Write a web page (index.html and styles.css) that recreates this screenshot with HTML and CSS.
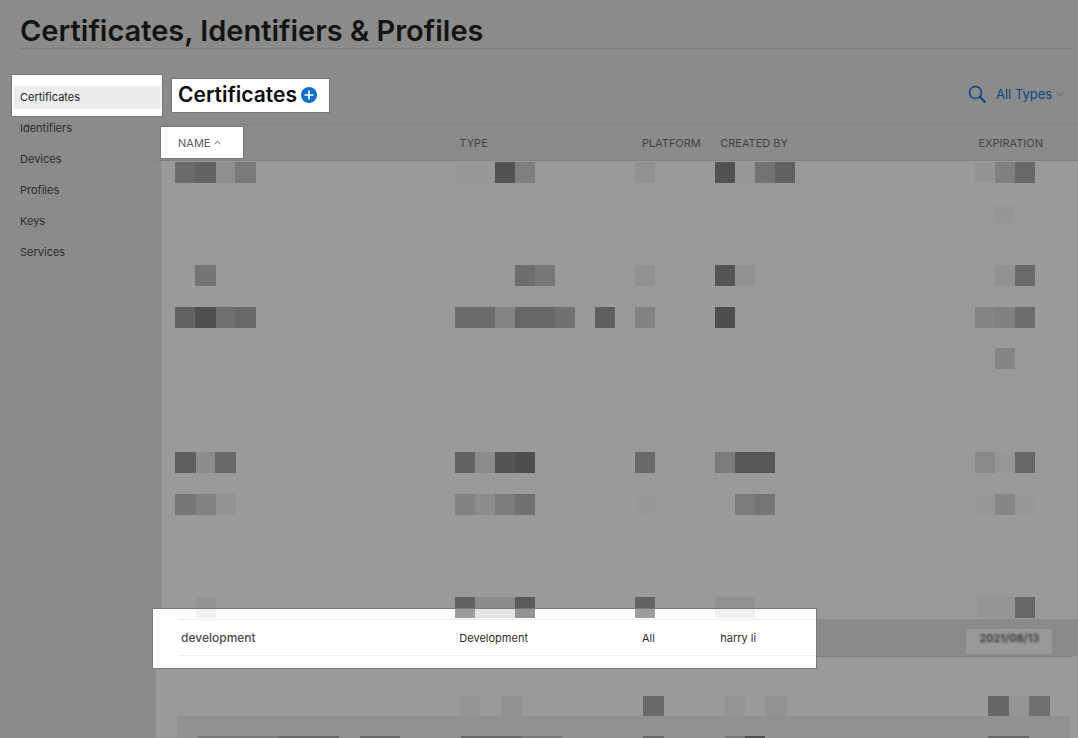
FILE: index.html
```html
<!DOCTYPE html>
<html lang="en">
<head>
<meta charset="utf-8">
<title>Certificates, Identifiers &amp; Profiles</title>
<link rel="stylesheet" href="styles.css">
</head>
<body>
<header class="page-header">
  <h1 class="page-title">Certificates, Identifiers &amp; Profiles</h1>
</header>
<div class="layout">
  <nav class="sidebar">
    <a class="nav-link nav-link-active" href="#certificates">Certificates</a>
    <a class="nav-link" href="#identifiers">Identifiers</a>
    <a class="nav-link" href="#devices">Devices</a>
    <a class="nav-link" href="#profiles">Profiles</a>
    <a class="nav-link" href="#keys">Keys</a>
    <a class="nav-link" href="#services">Services</a>
  </nav>
  <main class="content">
    <div class="toolbar">
      <div class="heading spotlight">
        <h2 class="section-title">Certificates</h2>
        <button class="icon-button" type="button" aria-label="Add certificate">
          <svg width="16" height="16" viewBox="0 0 16 16"><circle cx="8" cy="8" r="8" fill="#0f70cc"/><path d="M8 4.2v7.6M4.2 8h7.6" stroke="#fff" stroke-width="1.7" stroke-linecap="round"/></svg>
        </button>
      </div>
      <div class="filters">
        <button class="icon-button" type="button" aria-label="Search">
          <svg width="18" height="18" viewBox="0 0 18 18" fill="none" stroke="#084a86"><circle cx="7.5" cy="7.5" r="6" stroke-width="1.7"/><path d="M12 12l4.6 4.6" stroke-width="2.4" stroke-linecap="round"/></svg>
        </button>
        <label class="type-filter">
          <select class="type-select" aria-label="Certificate type"><option>All Types</option></select>
          <svg width="8" height="6" viewBox="0 0 8 6" fill="none" stroke="#3f648a" stroke-width="1"><path d="M.8 1.2L4 4.4l3.200-3.200"/></svg>
        </label>
      </div>
    </div>
    <table class="cert-table">
      <colgroup><col class="col-name"><col class="col-type"><col class="col-platform"><col class="col-created"><col class="col-expiration"></colgroup>
      <thead>
        <tr>
          <th class="name-head" scope="col"><button class="sort-button spotlight" type="button">NAME
            <svg width="7" height="5" viewBox="0 0 7 5" fill="none" stroke="#555" stroke-width="1"><path d="M.7 4L3.500 1.300 6.300 4"/></svg></button></th>
          <th scope="col">TYPE</th>
          <th scope="col">PLATFORM</th>
          <th scope="col">CREATED BY</th>
          <th scope="col">EXPIRATION</th>
        </tr>
      </thead>
      <tbody>
        <tr>
          <td class="redacted" colspan="5">
            <svg class="mosaic mosaic-upper" viewBox="156 161 922 458" preserveAspectRatio="none" aria-hidden="true">
              <path fill="#9a9a9a" d="M162 161h916v458H162z"/>
              <path fill="#a5a5a5" d="M162 161h1v458h-1z"/>
              <g transform="translate(0 162)">
                <path fill="#6b6b6b" d="M175 0h20v21h-20z"/><path fill="#636363" d="M195 0h21v21h-21z"/><path fill="#8f8f8f" d="M216 0h19v21h-19z"/><path fill="#7a7a7a" d="M235 0h21v21h-21z"/>
                <path fill="#989898" d="M455 0h40v21h-40z"/><path fill="#525252" d="M495 0h20v21h-20z"/><path fill="#7f7f7f" d="M515 0h20v21h-20z"/>
                <path fill="#919191" d="M635 0h20v21h-20z"/><path fill="#525252" d="M715 0h20v21h-20z"/><path fill="#979797" d="M735 0h20v21h-20z"/><path fill="#737373" d="M755 0h20v21h-20z"/><path fill="#616161" d="M775 0h20v21h-20z"/>
                <path fill="#949494" d="M975 0h20v21h-20z"/><path fill="#808080" d="M995 0h20v21h-20z"/><path fill="#686868" d="M1015 0h20v21h-20z"/>
                <path fill="#969696" d="M995 43h18v18h-18z"/>
              </g>
              <g transform="translate(0 265)">
                <path fill="#747474" d="M195 0h21v21h-21z"/><path fill="#6d6d6d" d="M515 0h20v21h-20z"/><path fill="#777" d="M535 0h20v21h-20z"/>
                <path fill="#919191" d="M635 0h20v21h-20z"/><path fill="#555" d="M715 0h20v21h-20z"/><path fill="#929292" d="M735 0h20v21h-20z"/>
                <path fill="#929292" d="M995 0h20v21h-20z"/><path fill="#6a6a6a" d="M1015 0h20v21h-20z"/>
              </g>
              <g transform="translate(0 307)">
                <path fill="#636363" d="M175 0h20v21h-20z"/><path fill="#505050" d="M195 0h21v21h-21z"/><path fill="#6e6e6e" d="M216 0h19v21h-19z"/><path fill="#686868" d="M235 0h21v21h-21z"/>
                <path fill="#6b6b6b" d="M455 0h40v21h-40z"/><path fill="#848484" d="M495 0h20v21h-20z"/><path fill="#676767" d="M515 0h40v21h-40z"/><path fill="#727272" d="M555 0h20v21h-20z"/><path fill="#5e5e5e" d="M595 0h20v21h-20z"/>
                <path fill="#838383" d="M635 0h20v21h-20z"/><path fill="#4d4d4d" d="M715 0h20v21h-20z"/>
                <path fill="#848484" d="M975 0h20v21h-20z"/><path fill="#808080" d="M995 0h20v21h-20z"/><path fill="#6c6c6c" d="M1015 0h20v21h-20z"/>
                <path fill="#858585" d="M995 41h20v21h-20z"/>
              </g>
              <g transform="translate(0 452)">
                <path fill="#5e5e5e" d="M175 0h21v21h-21z"/><path fill="#8c8c8c" d="M196 0h20v21h-20z"/><path fill="#696969" d="M215 0h21v21h-21z"/>
                <path fill="#636363" d="M455 0h20v21h-20z"/><path fill="#8c8c8c" d="M475 0h20v21h-20z"/><path fill="#545454" d="M495 0h20v21h-20z"/><path fill="#4e4e4e" d="M515 0h20v21h-20z"/>
                <path fill="#686868" d="M635 0h20v21h-20z"/><path fill="#7b7b7b" d="M715 0h20v21h-20z"/><path fill="#575757" d="M735 0h40v21h-40z"/>
                <path fill="#898989" d="M975 0h20v21h-20z"/><path fill="#979797" d="M995 0h20v21h-20z"/><path fill="#676767" d="M1015 0h20v21h-20z"/>
              </g>
              <g transform="translate(0 494)">
                <path fill="#767676" d="M175 0h21v21h-21z"/><path fill="#828282" d="M196 0h20v21h-20z"/><path fill="#939393" d="M216 0h20v21h-20z"/>
                <path fill="#828282" d="M455 0h20v21h-20z"/><path fill="#8c8c8c" d="M475 0h20v21h-20z"/><path fill="#7c7c7c" d="M495 0h20v21h-20z"/><path fill="#707070" d="M515 0h20v21h-20z"/>
                <path fill="#989898" d="M635 0h20v21h-20z"/><path fill="#7b7b7b" d="M735 0h20v21h-20z"/><path fill="#757575" d="M755 0h20v21h-20z"/>
                <path fill="#989898" d="M975 0h20v21h-20z"/><path fill="#868686" d="M995 0h20v21h-20z"/><path fill="#989898" d="M1015 0h20v21h-20z"/>
              </g>
              <g transform="translate(0 597)">
                <path fill="#949494" d="M196 0h20v21h-20z"/><path fill="#616161" d="M455 0h20v21h-20z"/><path fill="#8b8b8b" d="M475 0h40v21h-40z"/><path fill="#5b5b5b" d="M515 0h20v21h-20z"/>
                <path fill="#636363" d="M635 0h20v21h-20z"/><path fill="#919191" d="M715 0h40v21h-40z"/><path fill="#959595" d="M977 0h38v21h-38z"/><path fill="#676767" d="M1015 0h20v21h-20z"/>
              </g>
            </svg>
          </td>
        </tr>
        <tr class="cert-row">
          <td class="cert-name">
            <svg class="row-spotlight" viewBox="153 609 663 59" preserveAspectRatio="none" aria-hidden="true">
              <path fill="#fff" d="M153 609h663v59H153z"/>
              <path fill="#f0f0f0" d="M196 609h20v9h-20zM715 609h40v9h-40z"/><path fill="#9d9d9d" d="M455 609h20v9h-20zM635 609h20v9h-20z"/><path fill="#e4e4e4" d="M475 609h40v9h-40z"/><path fill="#939393" d="M515 609h20v9h-20z"/>
              <path fill="#eee" d="M178 619h638v1H178zM178 655h638v1H178z"/>
            </svg>
            <a class="cert-link" href="#development">development</a>
          </td>
          <td>Development</td>
          <td>All</td>
          <td>harry li</td>
          <td class="date-cell"><span class="date-chip"><span class="date-text">2021/08/13</span></span></td>
        </tr>
        <tr>
          <td class="redacted" colspan="5">
            <svg class="mosaic mosaic-lower" viewBox="156 656 922 82" preserveAspectRatio="none" aria-hidden="true">
              <path fill="#9a9a9a" d="M156 656h922v82H156z"/>
              <path fill="#7f7f7f" d="M816 656h256v1H816z"/>
              <path fill="#959595" d="M460 696h20v20h-20zM725 696h20v20h-20zM1009 696h20v20h-20z"/><path fill="#919191" d="M501 696h21v20h-21zM177 716h893v22H177z"/><path fill="#939393" d="M766 696h20v20h-20z"/>
              <path fill="#696969" d="M643 696h21v20h-21z"/><path fill="#656565" d="M988 696h21v20h-21z"/><path fill="#707070" d="M1029 696h21v20h-21z"/>
              <path fill="#777" d="M198 736h80v2h-80zM522 736h40v2h-40zM725 736h20v2h-20z"/><path fill="#666" d="M278 736h61v2h-61zM360 736h40v2h-40zM461 736h61v2h-61zM643 736h21v2h-21zM988 736h41v2h-41z"/><path fill="#4f4f4f" d="M745 736h20v2h-20z"/>
            </svg>
          </td>
        </tr>
      </tbody>
    </table>
  </main>
</div>
</body>
</html>
```
FILE: styles.css
```css
* {
  box-sizing: border-box;
}

body {
  margin: 0;
  background: #8b8b8b;
  color: #2e2e2e;
  font-family: Inter, "Liberation Sans", sans-serif;
  font-size: 11px;
}

button,
select {
  margin: 0;
  padding: 0;
  border: 0;
  background: none;
  font: inherit;
}

.page-header {
  padding: 13px 6px 0 20px;
}

.page-title {
  margin: 0;
  border-bottom: 1px solid #7c7c7c;
  color: #141414;
  font-size: 29px;
  font-weight: 600;
  line-height: 35px;
}

.layout {
  display: grid;
  grid-template-columns: 156px minmax(0, 1fr);
}

.sidebar {
  display: flex;
  flex-direction: column;
  gap: 8px;
  margin-right: -5px;
  padding: 37px 0 0 14px;
}

.nav-link {
  position: relative;
  padding-left: 6px;
  color: #2b2b2b;
  line-height: 23px;
  text-decoration: none;
}

.nav-link-active {
  z-index: 1;
  background: #ededed;
  color: #1c1c1c;
}

/* The white frame is drawn as thick borders round the grey pill. */
.nav-link-active::before {
  content: "";
  position: absolute;
  z-index: -1;
  inset: -11px -1px -7px -2px;
  border: solid #fff;
  border-width: 11px 1px 7px 2px;
  box-shadow: 0 0 0 1px #777;
}

.spotlight {
  background: #fff;
  box-shadow: 0 0 0 1px #777;
}

.toolbar {
  display: flex;
  align-items: flex-start;
  justify-content: space-between;
  height: 75px;
  padding: 30px 14px 0 16px;
}

.heading {
  display: flex;
  align-items: center;
  gap: 4px;
  padding: 0 12px 2px 6px;
}

.section-title {
  margin: 0;
  color: #0c0c0c;
  font-size: 21px;
  font-weight: 600;
  line-height: 31px;
}

.icon-button {
  display: flex;
}

.filters {
  display: flex;
  align-items: center;
  gap: 10px;
  height: 30px;
}

.type-filter {
  display: flex;
  align-items: center;
  gap: 3px;
}

.type-select {
  appearance: none;
  color: #084a86;
  font-size: 13px;
  line-height: 18px;
}

.cert-table {
  width: 100%;
  table-layout: fixed;
  border-collapse: collapse;
  text-align: left;
}

.col-name {
  width: 32.9%;
}

.col-type {
  width: 19.8%;
}

.col-platform {
  width: 8.5%;
}

.col-created {
  width: 28%;
}

.col-expiration {
  width: 10.8%;
}

th {
  height: 36px;
  padding: 0;
  border-top: 1px solid #828282;
  border-bottom: 1px solid #828282;
  color: #434343;
  font-weight: 400;
}

.name-head {
  padding-left: 5px;
}

.sort-button {
  display: flex;
  align-items: center;
  gap: 4px;
  width: 82px;
  height: 31px;
  padding-left: 17px;
  color: #5a5a5a;
}

td {
  padding: 0;
}

.mosaic {
  display: block;
  width: 100%;
  shape-rendering: crispEdges;
}

.mosaic-upper {
  height: 458px;
}

.mosaic-lower {
  height: 82px;
}

.cert-row {
  position: relative;
  z-index: 1;
  height: 37px;
  background: #8a8a8a;
}

.cert-name {
  padding-left: 25px;
}

.row-spotlight {
  position: absolute;
  z-index: -1;
  top: -10px;
  left: -3px;
  width: 71.9%;
  height: 59px;
  box-shadow: 0 0 0 1px #777;
  shape-rendering: crispEdges;
}

.cert-link {
  color: #4c4c50;
  font-size: 12px;
  font-weight: 500;
  text-decoration: none;
}

.date-cell {
  padding-top: 8px;
}

.date-chip {
  display: block;
  width: fit-content;
  margin-left: -12px;
  padding: 0 13px 7px;
  background: #999;
  line-height: 18px;
}

.date-text {
  color: #333;
  font-weight: 600;
  filter: blur(1px);
}
```
